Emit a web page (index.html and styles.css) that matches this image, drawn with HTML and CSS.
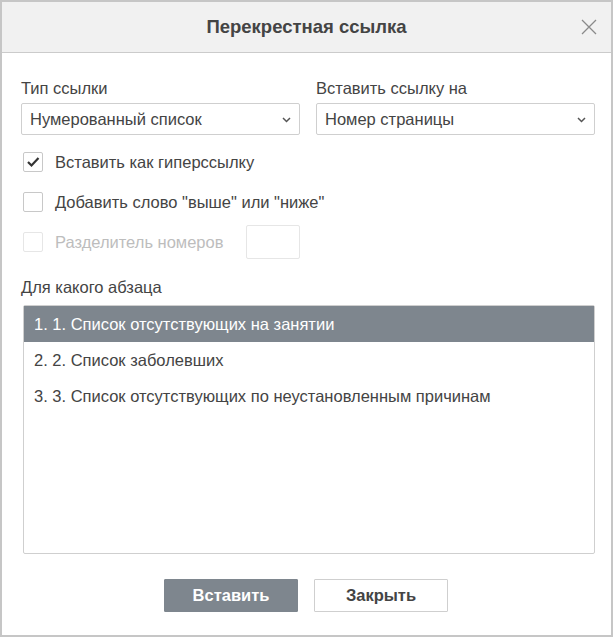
FILE: index.html
```html
<!DOCTYPE html>
<html>
<head>
    <title>Перекрестная ссылка</title>
    <link rel="stylesheet" href="styles.css">
</head>
<body>
    <div class="dialog">
        <div class="header">
            <span class="title">Перекрестная ссылка</span>
            <span class="close">
                <svg width="18" height="18" viewBox="0 0 18 18"><path d="M2 2 L16 16 M16 2 L2 16" stroke="#8a8a8a" stroke-width="1.3" fill="none"/></svg>
            </span>
        </div>
        <div class="content">
            <div class="fields">
                <div class="field">
                    <label>Тип ссылки</label>
                    <div class="select">
                        <span>Нумерованный список</span>
                        <svg width="9" height="6" viewBox="0 0 9 6"><path d="M1 1 L4.5 4.5 L8 1" stroke="#555" stroke-width="1.5" fill="none"/></svg>
                    </div>
                </div>
                <div class="field">
                    <label>Вставить ссылку на</label>
                    <div class="select">
                        <span>Номер страницы</span>
                        <svg width="9" height="6" viewBox="0 0 9 6"><path d="M1 1 L4.5 4.5 L8 1" stroke="#555" stroke-width="1.5" fill="none"/></svg>
                    </div>
                </div>
            </div>

            <div class="check-row first">
                <span class="checkbox">
                    <svg width="14" height="12" viewBox="0 0 14 12"><path d="M2 6 L5.5 9.5 L12.5 2" stroke="#333" stroke-width="2.2" fill="none"/></svg>
                </span>
                <span>Вставить как гиперссылку</span>
            </div>
            <div class="check-row">
                <span class="checkbox"></span>
                <span>Добавить слово "выше" или "ниже"</span>
            </div>
            <div class="check-row disabled">
                <span class="checkbox"></span>
                <span>Разделитель номеров</span>
                <span class="small-input"></span>
            </div>

            <label class="list-label">Для какого абзаца</label>
            <div class="list">
                <div class="item selected">1. 1. Список отсутствующих на занятии</div>
                <div class="item">2. 2. Список заболевших</div>
                <div class="item">3. 3. Список отсутствующих по неустановленным причинам</div>
            </div>

            <div class="buttons">
                <button class="primary">Вставить</button>
                <button>Закрыть</button>
            </div>
        </div>
    </div>
</body>
</html>
```

FILE: styles.css
```css
body {
    margin: 0;
    font-family: "Liberation Sans", Arial, sans-serif;
    font-size: 16.5px;
    color: #444;
    background-color: white;
}
.dialog {
    box-sizing: border-box;
    width: 613px;
    height: 637px;
    border: 2px solid #c6c6c6;
    display: flex;
    flex-direction: column;
}
.header {
    height: 50px;
    flex-shrink: 0;
    background-color: #f1f1f1;
    border-bottom: 1px solid #cbcbcb;
    display: flex;
    align-items: center;
    justify-content: center;
    position: relative;
}
.title {
    font-size: 18.5px;
    font-weight: bold;
    color: #444;
}
.close {
    position: absolute;
    right: 13px;
    top: 16px;
    line-height: 0;
}
.content {
    padding: 26px 16px 0 19px;
    display: flex;
    flex-direction: column;
}
.fields {
    display: flex;
    gap: 16px;
}
.field {
    width: 279px;
}
label {
    display: block;
    line-height: 18px;
    margin-bottom: 6px;
}
.select {
    box-sizing: border-box;
    height: 32px;
    border: 1px solid #cfcfcf;
    border-radius: 2px;
    display: flex;
    align-items: center;
    justify-content: space-between;
    padding: 0 8px 0 8px;
}
.select svg {
    margin-top: 1px;
}
.check-row {
    display: flex;
    align-items: center;
    gap: 12px;
    height: 20px;
    margin-top: 20px;
    margin-left: 2px;
}
.check-row.first {
    margin-top: 17px;
}
.checkbox {
    box-sizing: border-box;
    flex-shrink: 0;
    width: 20px;
    height: 20px;
    border: 1px solid #c8c8c8;
    border-radius: 2px;
    display: flex;
    align-items: center;
    justify-content: center;
}
.check-row.disabled {
    color: #bdbdbd;
}
.check-row.disabled .checkbox {
    border-color: #e6e6e6;
}
.small-input {
    box-sizing: border-box;
    width: 54px;
    height: 34px;
    border: 1px solid #e6e6e6;
    border-radius: 2px;
    margin-left: 10px;
}
.list-label {
    margin-top: 26px;
    margin-bottom: 9px;
}
.list {
    box-sizing: border-box;
    height: 249px;
    margin-left: 2px;
    border: 1px solid #cfcfcf;
    border-radius: 2px;
}
.item {
    height: 36px;
    line-height: 36px;
    padding-left: 10px;
    white-space: nowrap;
}
.item.selected {
    background-color: #7e868e;
    color: white;
}
.buttons {
    display: flex;
    justify-content: center;
    gap: 16px;
    margin-top: 25px;
    margin-left: -4px;
}
button {
    box-sizing: border-box;
    width: 134px;
    height: 33px;
    border: 1px solid #cfcfcf;
    border-radius: 1px;
    background-color: white;
    color: #444;
    font-family: "Liberation Sans", Arial, sans-serif;
    font-size: 16.5px;
    font-weight: bold;
}
button.primary {
    background-color: #7e868e;
    border-color: #7e868e;
    color: white;
}
```
